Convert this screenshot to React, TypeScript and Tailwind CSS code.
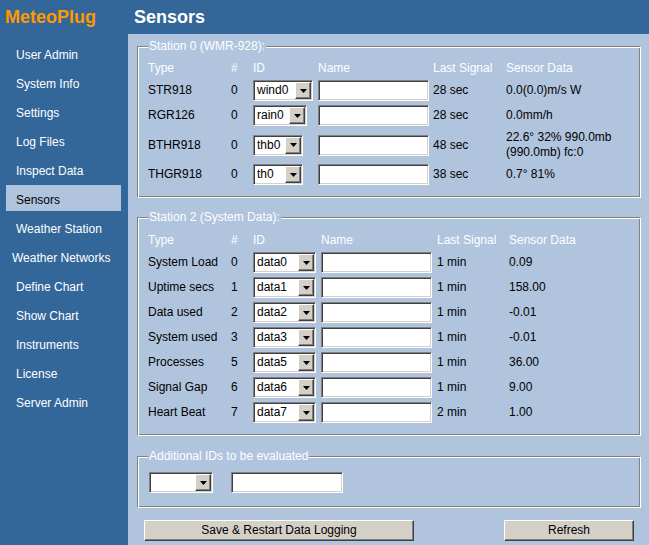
import React from 'react';

const NAV = [
  'User Admin',
  'System Info',
  'Settings',
  'Log Files',
  'Inspect Data',
  'Sensors',
  'Weather Station',
  'Weather Networks',
  'Define Chart',
  'Show Chart',
  'Instruments',
  'License',
  'Server Admin',
];

const STATION0 = [
  { type: 'STR918', n: '0', id: 'wind0', w: 'w-[60px]', last: '28 sec', data: ['0.0(0.0)m/s W'] },
  { type: 'RGR126', n: '0', id: 'rain0', w: 'w-[54px]', last: '28 sec', data: ['0.0mm/h'] },
  { type: 'BTHR918', n: '0', id: 'thb0', w: 'w-[50px]', last: '48 sec', data: ['22.6° 32% 990.0mb', '(990.0mb) fc:0'] },
  { type: 'THGR918', n: '0', id: 'th0', w: 'w-[50px]', last: '38 sec', data: ['0.7° 81%'] },
];

const STATION2 = [
  { type: 'System Load', n: '0', id: 'data0', last: '1 min', data: '0.09' },
  { type: 'Uptime secs', n: '1', id: 'data1', last: '1 min', data: '158.00' },
  { type: 'Data used', n: '2', id: 'data2', last: '1 min', data: '-0.01' },
  { type: 'System used', n: '3', id: 'data3', last: '1 min', data: '-0.01' },
  { type: 'Processes', n: '5', id: 'data5', last: '1 min', data: '36.00' },
  { type: 'Signal Gap', n: '6', id: 'data6', last: '1 min', data: '9.00' },
  { type: 'Heart Beat', n: '7', id: 'data7', last: '2 min', data: '1.00' },
];

const inset =
  'border border-t-[#808080] border-l-[#808080] border-b-white border-r-white shadow-[inset_1px_1px_0_#404040,inset_-1px_-1px_0_#d4d0c8]';
const outset =
  'border border-t-white border-l-white border-b-[#404040] border-r-[#404040] shadow-[inset_-1px_-1px_0_#808080]';
const groove =
  'border border-t-[#808080] border-l-[#808080] border-b-white border-r-white shadow-[inset_1px_1px_0_#fff,inset_-1px_-1px_0_#808080]';

function Select({ value, className }: { value: string; className: string }) {
  return (
    <div className={`flex h-[21px] bg-white p-[1px] ${inset} ${className}`}>
      <span className="flex-1 pl-[2px] leading-[17px] text-black">{value}</span>
      <span className={`flex w-[16px] items-center justify-center bg-[#d4d0c8] ${outset}`}>
        <svg width="7" height="4" viewBox="0 0 7 4">
          <path d="M0 0h7L3.5 4z" fill="#000" />
        </svg>
      </span>
    </div>
  );
}

function TextInput({ className = 'w-[111px]' }: { className?: string }) {
  return <div className={`h-[21px] bg-white ${inset} ${className}`} />;
}

function Button({ label, className }: { label: string; className: string }) {
  return (
    <div className={`flex h-[21px] items-center justify-center bg-[#d4d0c8] text-black ${outset} ${className}`}>
      {label}
    </div>
  );
}

function HeaderRow({ cols }: { cols: string }) {
  return (
    <div className={`grid h-[19px] items-center text-white ${cols}`}>
      <span>Type</span>
      <span>#</span>
      <span>ID</span>
      <span>Name</span>
      <span>Last Signal</span>
      <span>Sensor Data</span>
    </div>
  );
}

export default function App() {
  const cols0 = 'grid-cols-[83px_22px_65px_115px_73px_1fr]';
  const cols2 = 'grid-cols-[83px_22px_68px_116px_72px_1fr]';

  return (
    <div className="flex h-[545px] w-[649px] bg-[#336699] font-['Liberation_Sans',Arial,sans-serif] text-[12px] leading-[15px]">
      {/* sidebar */}
      <div className="flex w-[128px] shrink-0 flex-col">
        <div className="flex h-[34px] items-center pl-[5px] text-[18px] font-bold leading-normal text-[#ff9900]">
          MeteoPlug
        </div>
        <nav className="mt-[6px] flex flex-col">
          {NAV.map((item) => (
            <div
              key={item}
              className={`mx-[6px] mb-[3px] flex h-[26px] w-[115px] items-center pt-[4px] ${
                item === 'Weather Networks' ? 'pl-[6px]' : 'pl-[10px]'
              } ${item === 'Sensors' ? 'bg-[#b0c4de] text-black' : 'text-white'}`}
            >
              {item}
            </div>
          ))}
        </nav>
      </div>

      {/* main */}
      <div className="flex flex-1 flex-col">
        <div className="flex h-[34px] items-center pl-[6px] text-[18px] font-bold leading-normal text-white">
          Sensors
        </div>
        <div className="flex-1 bg-[#b0c4de] text-black">
          <fieldset className={`ml-[9px] mr-[8px] mt-[5px] pb-[10px] pl-[10px] pr-[4px] pt-[5px] ${groove}`}>
            <legend className="bg-[#b0c4de] px-[1px] text-white">Station 0 (WMR-928):</legend>
            <HeaderRow cols={cols0} />
            {STATION0.map((r) => (
              <div key={r.id} className={`grid min-h-[25px] items-center py-[2px] ${cols0}`}>
                <span>{r.type}</span>
                <span>{r.n}</span>
                <Select value={r.id} className={r.w} />
                <TextInput />
                <span>{r.last}</span>
                <span>
                  {r.data[0]}
                  {r.data[1] && (
                    <>
                      <br />
                      {r.data[1]}
                    </>
                  )}
                </span>
              </div>
            ))}
          </fieldset>

          <fieldset className={`ml-[9px] mr-[8px] mt-[12px] pb-[10px] pl-[10px] pr-[4px] pt-[6px] ${groove}`}>
            <legend className="bg-[#b0c4de] px-[1px] text-white">Station 2 (System Data):</legend>
            <HeaderRow cols={cols2} />
            {STATION2.map((r) => (
              <div key={r.id} className={`grid h-[25px] items-center ${cols2}`}>
                <span>{r.type}</span>
                <span>{r.n}</span>
                <Select value={r.id} className="w-[63px]" />
                <TextInput />
                <span>{r.last}</span>
                <span>{r.data}</span>
              </div>
            ))}
          </fieldset>

          <fieldset className={`ml-[9px] mr-[8px] mt-[13px] pb-[12px] pl-[10px] pr-[4px] pt-[6px] ${groove}`}>
            <legend className="bg-[#b0c4de] px-[1px] text-white">Additional IDs to be evaluated</legend>
            <div className="flex items-center gap-[18px] py-[2px] pl-[1px]">
              <Select value="" className="w-[64px]" />
              <TextInput className="w-[112px]" />
            </div>
          </fieldset>

          <div className="mt-[12px] flex justify-between pl-[16px] pr-[15px]">
            <Button label="Save & Restart Data Logging" className="w-[270px]" />
            <Button label="Refresh" className="w-[130px]" />
          </div>
        </div>
      </div>
    </div>
  );
}
